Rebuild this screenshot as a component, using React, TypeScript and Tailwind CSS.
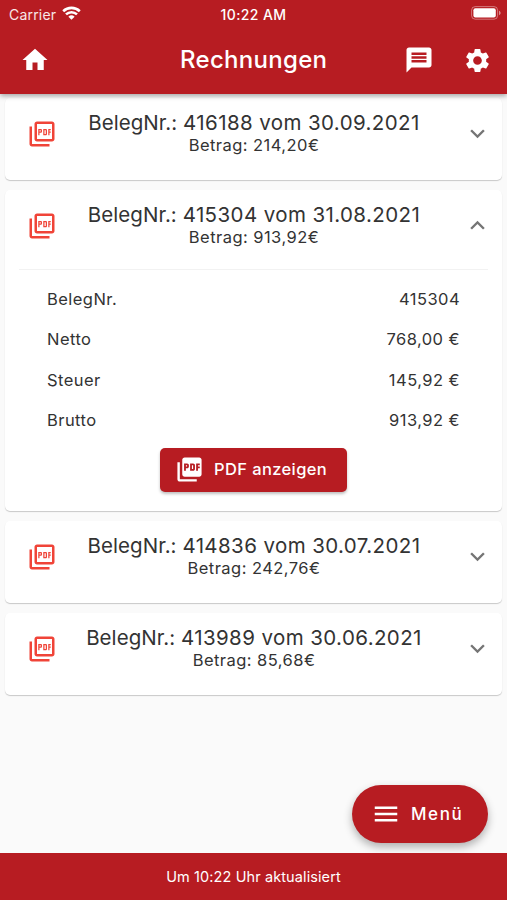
import {
  MdExpandLess,
  MdExpandMore,
  MdHome,
  MdMenu,
  MdMessage,
  MdOutlinePictureAsPdf,
  MdPictureAsPdf,
  MdSettings,
} from 'react-icons/md';

interface Invoice {
  id: string;
  date: string;
  amount: string;
  net?: string;
  tax?: string;
}

const invoices: Invoice[] = [
  { id: '416188', date: '30.09.2021', amount: '214,20' },
  { id: '415304', date: '31.08.2021', amount: '913,92', net: '768,00', tax: '145,92' },
  { id: '414836', date: '30.07.2021', amount: '242,76' },
  { id: '413989', date: '30.06.2021', amount: '85,68' },
];

function StatusBar() {
  return (
    <div className="grid h-[27px] grid-cols-3 items-center pt-px text-[14px]">
      <div className="flex items-center gap-[6px] pl-[9px] tracking-[0.2px] text-white/90">
        Carrier
        <svg className="-mt-[2px] h-[14px] w-[19px]" viewBox="0 0 19 14" fill="none" stroke="white" strokeWidth="2.6">
          <path d="M1.2 5.2a12 12 0 0 1 16.6 0" />
          <path d="M4 8.4a8 8 0 0 1 11 0" />
          <path d="M9.5 13.8 6.4 10.7a4.6 4.6 0 0 1 6.2 0z" fill="white" stroke="none" />
        </svg>
      </div>
      <div className="text-center font-medium tracking-[0.4px]">10:22 AM</div>
      <div className="-mt-[2px] flex justify-end pr-[6px]">
        <svg className="h-[14px] w-[30px]" viewBox="0 0 30 14">
          <rect x="0.6" y="0.6" width="26" height="12.6" rx="3.6" fill="none" stroke="white" strokeOpacity="0.4" />
          <rect x="2.4" y="2.3" width="22.4" height="9.2" rx="2" fill="white" />
          <path d="M28 4.8v4.4c1-.4 1.6-1.2 1.6-2.2S29 5.2 28 4.8z" fill="white" fillOpacity="0.5" />
        </svg>
      </div>
    </div>
  );
}

function DetailRow({ label, value }: { label: string; value: string }) {
  return (
    <div className="flex h-[40.4px] items-center justify-between">
      <span>{label}</span>
      <span>{value}</span>
    </div>
  );
}

function InvoiceCard({ invoice }: { invoice: Invoice }) {
  const open = Boolean(invoice.net);
  const Chevron = open ? MdExpandLess : MdExpandMore;

  return (
    <section className="rounded-[5px] bg-white shadow-[0_1px_1px_rgba(0,0,0,0.2)]">
      <div className="flex h-[82px] pl-[22px] pr-[10px]">
        <MdOutlinePictureAsPdf className="mt-[20.5px] size-[30px] shrink-0 text-[#f04438]" />
        <div className="mt-[12px] flex-1 pr-[12px] text-center">
          <h2 className="text-[20.5px] leading-[26px] tracking-[0.4px]">
            <span className="tracking-[0.05px]">BelegNr.: </span>
            {invoice.id} vom {invoice.date}
          </h2>
          <p className="text-[16.5px] leading-[19px] tracking-[0.45px]">Betrag: {invoice.amount}€</p>
        </div>
        <Chevron className="mt-[21px] size-[29px] shrink-0 text-[#757575]" />
      </div>
      {open && (
        <div className="mx-[14px] -mt-[3px] h-[242px] border-t border-[#f2f2f2] px-[28px] pt-[9px] text-[16.5px] tracking-[0.45px]">
          <DetailRow label="BelegNr." value={invoice.id} />
          <DetailRow label="Netto" value={`${invoice.net} €`} />
          <DetailRow label="Steuer" value={`${invoice.tax} €`} />
          <DetailRow label="Brutto" value={`${invoice.amount} €`} />
          <button className="mx-auto mt-[7px] flex h-[44px] w-[187px] items-center gap-[10px] rounded-[5px] bg-[#b71c22] pl-[15px] font-medium tracking-[0.38px] text-white shadow-[0_2px_3px_rgba(0,0,0,0.25)]">
            <MdPictureAsPdf className="size-[29px]" />
            PDF anzeigen
          </button>
        </div>
      )}
    </section>
  );
}

export default function App() {
  return (
    <div className="relative flex h-[900px] w-[507px] flex-col overflow-hidden bg-[#fafafa] font-['Inter',sans-serif] text-[#333]">
      <header className="relative z-10 h-[94px] shrink-0 bg-[#b71c22] text-white shadow-[0_2px_5px_rgba(0,0,0,0.35)]">
        <StatusBar />
        <div className="flex h-[66px] items-center pl-[20px] pr-[15px]">
          <MdHome className="size-[30px]" />
          <h1 className="ml-[130px] text-[24px] font-medium tracking-[0.3px]">Rechnungen</h1>
          <MdMessage className="ml-auto size-[30px]" />
          <MdSettings className="ml-[29px] size-[29px]" />
        </div>
      </header>
      <main className="flex flex-1 flex-col gap-[10px] px-[5px] pt-[4px]">
        {invoices.map((invoice) => (
          <InvoiceCard key={invoice.id} invoice={invoice} />
        ))}
      </main>
      <button className="absolute bottom-[57px] right-[19px] flex h-[58px] w-[136px] items-center gap-[10px] rounded-full bg-[#b71c22] pl-[19px] text-[17px] font-medium tracking-[1.6px] text-white shadow-[0_4px_8px_rgba(0,0,0,0.3)]">
        <MdMenu className="size-[30px]" />
        <span className="pt-px">Menü</span>
      </button>
      <footer className="relative flex h-[47px] shrink-0 items-center justify-center bg-[#b71c22] text-[14.5px] tracking-[0.1px] text-white">
        Um 10:22 Uhr aktualisiert
      </footer>
    </div>
  );
}
